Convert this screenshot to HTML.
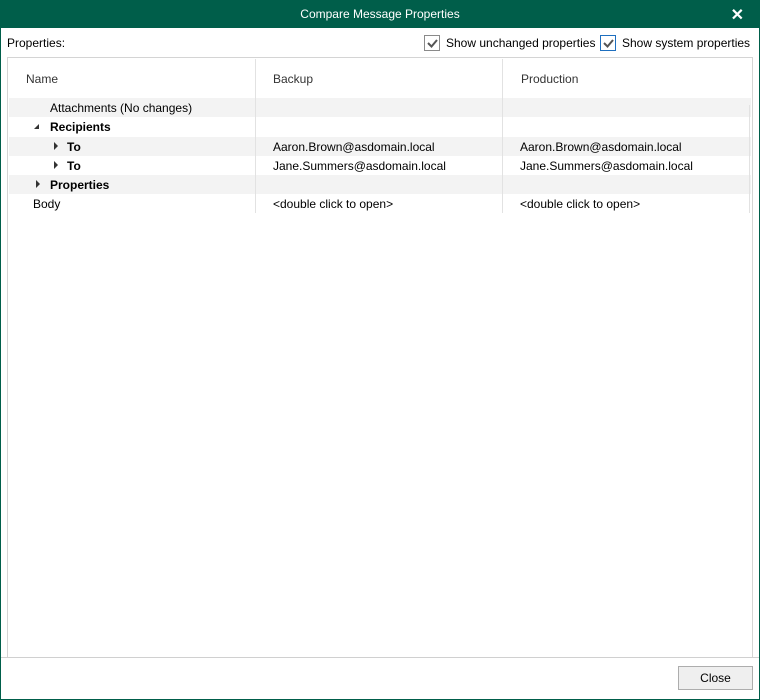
<!DOCTYPE html>
<html><head><style>
*{margin:0;padding:0;box-sizing:border-box}
body{width:760px;height:700px;position:relative;background:#fff;font-family:"Liberation Sans",sans-serif;font-size:12px;color:#000;overflow:hidden}
.frame{position:absolute;left:0;top:0;width:760px;height:700px;border:1px solid #005e4a}
.title{position:absolute;left:0;top:0;width:760px;height:28px;background:#005e4a;color:#fff;text-align:center;line-height:28px;font-size:12px}
.x{position:absolute;right:16px;top:5px;color:#fff;font-size:16px;font-weight:bold}
.abs{position:absolute;white-space:nowrap}
.cb{position:absolute;width:16px;height:16px;border:1px solid #8a8a8a;background:#fff}
.cb svg{position:absolute;left:2px;top:3px}
.tbl{position:absolute;left:7px;top:57px;width:746px;height:601px;border:1px solid #d4d4d4}
.row{position:absolute;left:1px;width:742px;height:19px}
.g{background:#f3f3f3}
.vl{position:absolute;width:1px;background:#e2e2e2}
.tri{position:absolute;width:0;height:0}
</style></head><body>
<div class="frame"></div>
<div class="title">Compare Message Properties</div>
<div class="x">✕</div>
<div class="abs" style="left:7px;top:36px">Properties:</div>
<div class="cb" style="left:424px;top:35px"><svg width="11" height="9"><path d="M1 4 L4.5 7.5 L10 1" stroke="#555" stroke-width="2" fill="none"/></svg></div>
<div class="abs" style="left:446px;top:36px">Show unchanged properties</div>
<div class="cb" style="left:600px;top:35px;border-color:#1e6fbf"><svg width="11" height="9"><path d="M1 4 L4.5 7.5 L10 1" stroke="#555" stroke-width="2" fill="none"/></svg></div>
<div class="abs" style="left:622px;top:36px">Show system properties</div>
<div class="tbl"></div>
<div class="row g" style="top:98px;left:9px"></div>
<div class="row" style="top:117px;left:9px"></div>
<div class="row g" style="top:137px;left:9px"></div>
<div class="row" style="top:156px;left:9px"></div>
<div class="row g" style="top:175px;left:9px"></div>
<div class="vl" style="left:255px;top:59px;height:154px"></div>
<div class="vl" style="left:502px;top:59px;height:154px"></div>
<div class="vl" style="left:749px;top:105px;height:108px"></div>
<div class="abs" style="left:26px;top:72px;color:#333">Name</div>
<div class="abs" style="left:273px;top:72px;color:#333">Backup</div>
<div class="abs" style="left:521px;top:72px;color:#333">Production</div>
<div class="abs" style="left:50px;top:101px">Attachments (No changes)</div>
<div class="tri" style="left:34px;top:124px;border-left:5px solid transparent;border-bottom:5px solid #333"></div>
<div class="abs" style="left:50px;top:120px;font-weight:bold">Recipients</div>
<div class="tri" style="left:54px;top:142px;border-top:4px solid transparent;border-bottom:4px solid transparent;border-left:4px solid #333"></div>
<div class="abs" style="left:67px;top:140px;font-weight:bold">To</div>
<div class="tri" style="left:54px;top:161px;border-top:4px solid transparent;border-bottom:4px solid transparent;border-left:4px solid #333"></div>
<div class="abs" style="left:67px;top:159px;font-weight:bold">To</div>
<div class="tri" style="left:36px;top:180px;border-top:4px solid transparent;border-bottom:4px solid transparent;border-left:4px solid #333"></div>
<div class="abs" style="left:50px;top:178px;font-weight:bold">Properties</div>
<div class="abs" style="left:33px;top:197px">Body</div>
<div class="abs" style="left:273px;top:140px">Aaron.Brown@asdomain.local</div>
<div class="abs" style="left:273px;top:159px">Jane.Summers@asdomain.local</div>
<div class="abs" style="left:273px;top:197px">&lt;double click to open&gt;</div>
<div class="abs" style="left:520px;top:140px">Aaron.Brown@asdomain.local</div>
<div class="abs" style="left:520px;top:159px">Jane.Summers@asdomain.local</div>
<div class="abs" style="left:520px;top:197px">&lt;double click to open&gt;</div>
<div class="abs" style="left:1px;top:657px;width:758px;height:1px;background:#d0d0d0"></div>
<div class="abs" style="left:678px;top:666px;width:75px;height:24px;border:1px solid #adadad;background:#efefef;text-align:center;line-height:22px">Close</div>
</body></html>
